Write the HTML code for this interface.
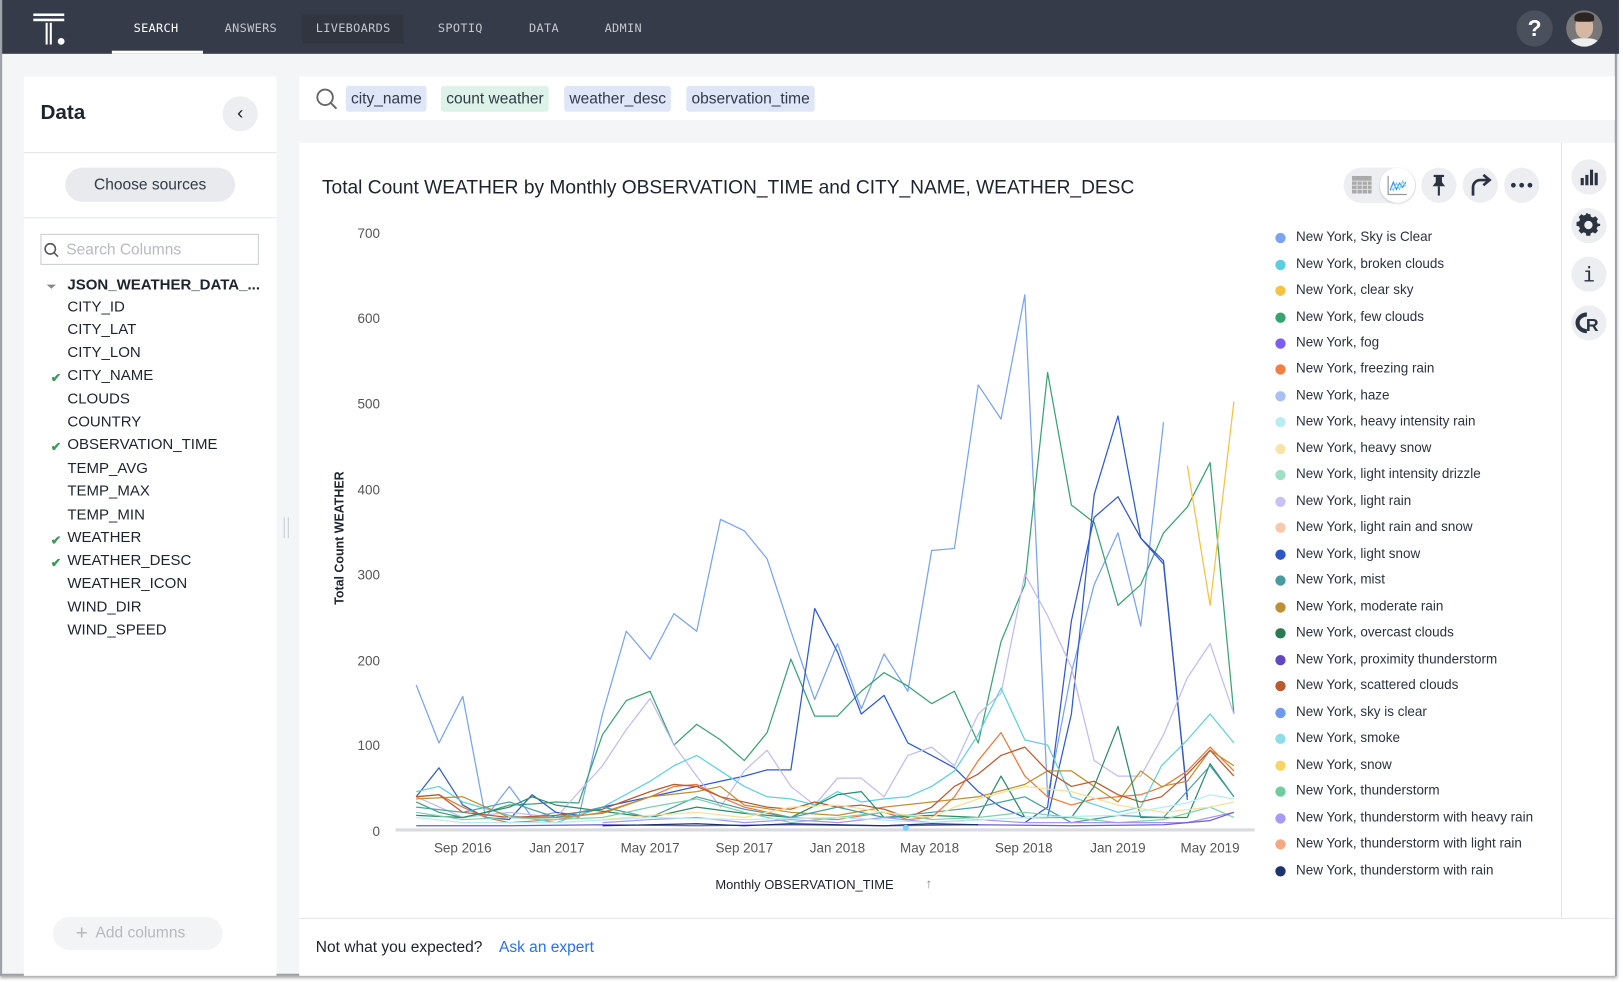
<!DOCTYPE html>
<html><head><meta charset="utf-8">
<style>
*{box-sizing:border-box;margin:0;padding:0}
html,body{width:1623px;height:982px;overflow:hidden;background:#fff;font-family:"Liberation Sans",sans-serif}
#w{position:absolute;left:0;top:0;width:1568px;height:949px;transform:translate(-2px,0) scale(1.0351,1.0348);transform-origin:0 0;}
.win{position:absolute;left:2px;top:0;width:1562px;height:943px;background:#f4f5f7;border:2px solid #9a9ea6;border-top:none;box-shadow:0 2px 3px rgba(0,0,0,.35)}
.nav{position:absolute;left:0;top:0;width:1562px;height:52px;background:#353b48}
.nav span{position:absolute;top:20px;font-family:"DejaVu Sans Mono","Liberation Mono",monospace;font-size:11.5px;color:#c3c7cf;letter-spacing:.3px}
.abs{position:absolute}
.panel{position:absolute;background:#fff}
.item{position:absolute;left:63px;font-size:14.5px;color:#1d232f}
.chk{position:absolute;left:47px;color:#3a9a5a;font-size:12px;font-weight:bold}
.chip{position:absolute;top:83px;height:25px;line-height:25px;padding:0 5px;font-size:15px;color:#333a47;border-radius:3px}
.circ{position:absolute;width:34px;height:34px;border-radius:50%;background:#eceef2}
.lg{position:absolute;left:1230px;font-size:13px;color:#2b3240;white-space:nowrap}
.lg i{position:absolute;left:0;top:4px;width:10px;height:10px;border-radius:50%}
.lg b{font-weight:normal;margin-left:20px}
.yl{position:absolute;left:330px;width:35px;text-align:right;font-size:13px;color:#555}
.xl{position:absolute;top:812px;font-size:13px;color:#555;transform:translateX(-50%);white-space:nowrap}
</style></head><body><div id="w">
<div class="win">
<div class="nav">
 <svg class="abs" style="left:30px;top:13px" width="34" height="32" viewBox="0 0 34 32"><rect x="0" y="0" width="30" height="2.5" fill="#fff"/><rect x="0" y="5" width="30" height="2.5" fill="#fff"/><rect x="12" y="9" width="2" height="21" fill="#fff"/><rect x="16" y="9" width="2" height="21" fill="#fff"/><circle cx="27" cy="27" r="3.3" fill="#fff"/></svg>
 <span style="left:127px;color:#fff">SEARCH</span>
 <div class="abs" style="left:106px;top:49px;width:88px;height:3px;background:#fff"></div>
 <span style="left:215px">ANSWERS</span>
 <div class="abs" style="left:290px;top:14px;width:98px;height:28px;background:#30353f"></div>
 <span style="left:303px">LIVEBOARDS</span>
 <span style="left:421px">SPOTIQ</span>
 <span style="left:509px">DATA</span>
 <span style="left:582px">ADMIN</span>
 <div class="abs" style="left:1463px;top:10px;width:35px;height:35px;border-radius:50%;background:#4a505c;color:#fff;font-size:22px;font-weight:bold;text-align:center;line-height:35px">?</div>
 <div class="abs" style="left:1511px;top:10px;width:35px;height:35px;border-radius:50%;background:#777;overflow:hidden"><div class="abs" style="left:9px;top:5px;width:17px;height:22px;border-radius:45%;background:#d6b7a3"></div><div class="abs" style="left:8px;top:2px;width:19px;height:9px;border-radius:50% 50% 20% 20%;background:#2b2420"></div><div class="abs" style="left:3px;top:27px;width:29px;height:12px;border-radius:40%;background:#eee"></div></div>
</div>

<div class="panel" style="left:21px;top:74px;width:244px;height:869px"></div>
<div class="abs" style="left:37px;top:98px;font-size:20px;font-weight:bold;color:#1d232f">Data</div>
<div class="circ" style="left:213px;top:93px;text-align:center;line-height:33px;font-size:18px;color:#222">&#8249;</div>
<div class="abs" style="left:21px;top:147px;width:244px;height:1px;background:#e3e5e9"></div>
<div class="abs" style="left:61px;top:162px;width:164px;height:33px;border-radius:17px;background:#e8eaee;text-align:center;line-height:33px;font-size:15px;color:#333a47">Choose sources</div>
<div class="abs" style="left:21px;top:210px;width:244px;height:1px;background:#e3e5e9"></div>
<div class="abs" style="left:37px;top:226px;width:211px;height:30px;border:1px solid #c8cbd1"></div>
<svg class="abs" style="left:40px;top:234px" width="16" height="16"><circle cx="6.5" cy="6.5" r="5" fill="none" stroke="#555" stroke-width="1.5"/><line x1="10" y1="10" x2="14" y2="14" stroke="#555" stroke-width="1.5"/></svg>
<div class="abs" style="left:62px;top:233px;font-size:15px;color:#b6bac2">Search Columns</div>
<svg class="abs" style="left:42px;top:274px" width="12" height="8"><path d="M1 1h9l-4.5 4z" fill="#888"/></svg>
<div class="item" style="top:268px;font-weight:bold">JSON_WEATHER_DATA_...</div>
<div class="item" style="top:289px">CITY_ID</div>
<div class="item" style="top:311px">CITY_LAT</div>
<div class="item" style="top:333px">CITY_LON</div>
<div class="chk" style="top:358px">&#10004;</div><div class="item" style="top:355px">CITY_NAME</div>
<div class="item" style="top:378px">CLOUDS</div>
<div class="item" style="top:400px">COUNTRY</div>
<div class="chk" style="top:425px">&#10004;</div><div class="item" style="top:422px">OBSERVATION_TIME</div>
<div class="item" style="top:445px">TEMP_AVG</div>
<div class="item" style="top:467px">TEMP_MAX</div>
<div class="item" style="top:490px">TEMP_MIN</div>
<div class="chk" style="top:515px">&#10004;</div><div class="item" style="top:512px">WEATHER</div>
<div class="chk" style="top:537px">&#10004;</div><div class="item" style="top:534px">WEATHER_DESC</div>
<div class="item" style="top:556px">WEATHER_ICON</div>
<div class="item" style="top:579px">WIND_DIR</div>
<div class="item" style="top:601px">WIND_SPEED</div>
<div class="abs" style="left:49px;top:886px;width:164px;height:32px;border-radius:16px;background:#f3f4f6;color:#b5b9c0;font-size:15px;line-height:32px;padding-left:22px"><span style="font-size:20px;vertical-align:-2px">+</span>&nbsp; Add columns</div>
<div class="abs" style="left:272px;top:500px;width:1px;height:20px;background:#c9ccd2"></div>
<div class="abs" style="left:276px;top:500px;width:1px;height:20px;background:#c9ccd2"></div>

<div class="panel" style="left:287px;top:74px;width:1271px;height:42px"></div>
<svg class="abs" style="left:302px;top:84px" width="24" height="24"><circle cx="10" cy="10" r="7.5" fill="none" stroke="#666" stroke-width="1.8"/><line x1="15.5" y1="15.5" x2="21" y2="21" stroke="#666" stroke-width="1.8"/></svg>
<div class="chip" style="left:332px;background:#dfe6f8">city_name</div>
<div class="chip" style="left:424px;background:#dcf3e9">count weather</div>
<div class="chip" style="left:543px;background:#dfe6f8">weather_desc</div>
<div class="chip" style="left:661px;background:#dfe6f8">observation_time</div>

<div class="panel" style="left:287px;top:138px;width:1271px;height:805px"></div>
<div class="abs" style="left:1506px;top:138px;width:1px;height:750px;background:#e3e5e9"></div>
<div class="abs" style="left:287px;top:887px;width:1271px;height:1px;background:#e3e5e9"></div>
<div class="abs" style="left:309px;top:170px;font-size:18.5px;color:#1d232f">Total Count WEATHER by Monthly OBSERVATION_TIME and CITY_NAME, WEATHER_DESC</div>
<div class="abs" style="left:1296px;top:162px;width:70px;height:34px;border-radius:17px;background:#eceef2"></div>
<svg class="abs" style="left:1304px;top:170px" width="20" height="18"><rect x="0" y="0" width="19" height="17" fill="#aaa"/><g stroke="#ddd" stroke-width="1"><line x1="0" y1="5" x2="19" y2="5"/><line x1="0" y1="9" x2="19" y2="9"/><line x1="0" y1="13" x2="19" y2="13"/><line x1="5" y1="5" x2="5" y2="17"/><line x1="10" y1="5" x2="10" y2="17"/><line x1="15" y1="5" x2="15" y2="17"/></g></svg>
<div class="abs" style="left:1331px;top:162px;width:34px;height:34px;border-radius:50%;background:#fff;box-shadow:0 1px 2px rgba(0,0,0,.15)"></div>
<svg class="abs" style="left:1338px;top:169px" width="20" height="20"><path d="M1 1V19H19" fill="none" stroke="#999" stroke-width="1.2"/><path d="M3 15l3-8 3 7 3-6 3 4 3-5" fill="none" stroke="#4a90e2" stroke-width="1.2"/><path d="M3 11l3 4 3-7 3 6 3-8 3 5" fill="none" stroke="#7ed3f0" stroke-width="1.2"/></svg>
<div class="circ" style="left:1371px;top:162px"></div>
<svg class="abs" style="left:1379px;top:168px" width="18" height="22"><path d="M4 1h10v2h-2v5l3 4H3l3-4V3H4z" fill="#2b3240"/><rect x="8" y="12" width="2" height="9" fill="#2b3240"/></svg>
<div class="circ" style="left:1411px;top:162px"></div>
<svg class="abs" style="left:1417px;top:167px" width="22" height="24"><path d="M4 22V14a7 7 0 0 1 7-7h8" fill="none" stroke="#2b3240" stroke-width="2.6"/><path d="M14 2l6 5-6 5" fill="none" stroke="#2b3240" stroke-width="2.6"/></svg>
<div class="circ" style="left:1451px;top:162px"></div>
<svg class="abs" style="left:1457px;top:176px" width="24" height="6"><circle cx="3" cy="3" r="2.3" fill="#2b3240"/><circle cx="11" cy="3" r="2.3" fill="#2b3240"/><circle cx="19" cy="3" r="2.3" fill="#2b3240"/></svg>

<div class="circ" style="left:1516px;top:154px"></div>
<svg class="abs" style="left:1524px;top:162px" width="18" height="18"><rect x="1" y="10" width="3" height="7" fill="#2b3240"/><rect x="5.5" y="7" width="3" height="10" fill="#2b3240"/><rect x="10" y="2" width="3" height="15" fill="#2b3240"/><rect x="14.5" y="5" width="3" height="12" fill="#2b3240"/></svg>
<div class="circ" style="left:1516px;top:201px"></div>
<svg class="abs" style="left:1521px;top:206px" width="24" height="24" viewBox="0 0 24 24"><path d="M12 2l2 0 .6 2.6 2.2 1 2.3-1.4 2.8 2.8-1.4 2.3 1 2.2L24 12l0 2-2.6.6-1 2.2 1.4 2.3-2.8 2.8-2.3-1.4-2.2 1L14 24h-4l-.6-2.6-2.2-1-2.3 1.4-2.8-2.8 1.4-2.3-1-2.2L0 14v-4l2.6-.6 1-2.2-1.4-2.3 2.8-2.8 2.3 1.4 2.2-1L10 0z" transform="translate(0 -1) scale(.95)" fill="#2b3240"/><circle cx="11.5" cy="11.5" r="4" fill="#eceef2"/></svg>
<div class="circ" style="left:1516px;top:248px;text-align:center;line-height:34px;font-family:'DejaVu Sans Mono',monospace;font-size:20px;color:#2b3240">i</div>
<div class="circ" style="left:1516px;top:295px"></div>
<svg class="abs" style="left:1519px;top:300px" width="28" height="24"><path d="M12 4A9 8 0 1 0 12 20" fill="none" stroke="#2b3240" stroke-width="4"/><text x="11" y="20" font-family="Liberation Sans" font-weight="bold" font-size="17" fill="#2b3240">R</text></svg>

<div class="yl" style="top:218px">700</div>
<div class="yl" style="top:300px">600</div>
<div class="yl" style="top:383px">500</div>
<div class="yl" style="top:466px">400</div>
<div class="yl" style="top:548px">300</div>
<div class="yl" style="top:631px">200</div>
<div class="yl" style="top:713px">100</div>
<div class="yl" style="top:796px">0</div>
<div class="abs" style="left:326px;top:520px;transform:translate(-50%,-50%) rotate(-90deg);font-size:12px;font-weight:bold;color:#1d232f;white-space:nowrap">Total Count WEATHER</div>
<div class="xl" style="left:445px">Sep 2016</div>
<div class="xl" style="left:536px">Jan 2017</div>
<div class="xl" style="left:626px">May 2017</div>
<div class="xl" style="left:717px">Sep 2017</div>
<div class="xl" style="left:807px">Jan 2018</div>
<div class="xl" style="left:896px">May 2018</div>
<div class="xl" style="left:987px">Sep 2018</div>
<div class="xl" style="left:1078px">Jan 2019</div>
<div class="xl" style="left:1167px">May 2019</div>
<div class="abs" style="left:689px;top:848px;font-size:12.5px;color:#1d232f">Monthly OBSERVATION_TIME</div>
<div class="abs" style="left:892px;top:846px;font-size:13px;color:#888">&#8593;</div>

<svg class="abs" style="left:0;top:0" width="1568" height="949">
<line x1="380" y1="802" x2="1210" y2="802" stroke="#d9dbdf" stroke-width="3"/>
<g fill="none" stroke-width="1.2" stroke-linejoin="round">
<polyline stroke="#79a3f2" points="400,662 422,718 445,673 467,790 490,760 512,790 535,785 557,790 580,690 603,610 626,637 649,593 671,610 694,502 717,513 739,540 762,610 785,676 807,622 830,685 852,632 875,668 898,532 920,530 943,372 965,405 988,285 1010,770 1033,650 1055,565 1078,515 1100,605 1122,408"/>
<polyline stroke="#3aa372" points="400,775 422,785 445,790 467,785 490,778 512,777 535,775 557,776 580,710 603,677 626,668 649,720 671,700 694,715 717,735 739,708 762,637 785,692 807,692 830,668 852,650 875,663 898,680 920,668 943,718 965,620 988,565 1010,360 1033,488 1055,505 1078,585 1100,565 1122,515 1145,490 1167,447 1190,690"/>
<polyline stroke="#2d5bd0" points="400,770 422,742 445,778 467,790 490,792 512,768 535,785 557,788 580,780 603,775 626,770 649,765 671,760 694,755 717,750 739,744 762,744 785,588 807,630 830,690 852,672 875,718 898,730 920,742 943,765 965,780 988,790 1010,790 1033,690 1055,478 1078,402 1100,520 1122,542 1145,773"/>
<polyline stroke="#3457c8" points="988,795 1010,780 1033,600 1055,500 1078,480 1100,520 1122,545 1145,770"/>
<polyline stroke="#c2bbf2" points="400,770 445,790 490,785 535,790 580,740 603,705 626,675 649,720 671,750 694,780 717,745 739,725 762,760 785,778 807,752 830,752 852,770 875,730 898,722 920,740 943,690 965,670 988,555 1010,595 1033,645 1055,735 1078,750 1100,750 1122,710 1145,655 1167,622 1190,690"/>
<polyline stroke="#f5c242" points="1145,450 1167,585 1190,388"/>
<polyline stroke="#e8793a" points="400,770 422,768 445,780 467,790 490,795 535,792 580,785 626,770 649,760 671,758 694,770 717,780 762,790 807,792 852,785 875,792 898,790 920,770 943,735 965,708 988,750 1010,770 1033,778 1055,772 1078,770 1100,768 1122,760 1145,745 1167,722 1190,745"/>
<polyline stroke="#5fd0e0" points="400,765 422,760 445,775 490,788 535,795 580,780 626,755 649,740 671,730 694,745 717,760 739,770 762,772 785,778 807,765 830,775 852,772 875,770 898,760 920,745 943,710 965,665 988,715 1010,720 1033,770 1078,785 1100,780 1120,740 1145,715 1167,690 1190,718"/>
<polyline stroke="#c09030" points="400,772 445,770 490,790 535,790 580,786 626,770 671,765 694,760 717,778 762,785 807,788 852,780 898,775 943,770 988,758 1010,745 1033,745 1055,760 1078,775 1100,745 1120,760 1145,755 1167,725 1190,740"/>
<polyline stroke="#b85a30" points="400,770 422,768 445,785 490,790 535,788 580,782 626,765 649,758 671,760 694,770 739,780 762,782 785,775 807,780 830,778 852,782 875,790 898,780 920,760 943,748 965,730 988,722 1010,745 1033,760 1055,755 1078,768 1100,775 1120,770 1145,748 1167,725 1190,750"/>
<polyline stroke="#2e8a6a" points="400,788 445,790 490,780 512,770 535,778 580,784 626,790 671,780 717,786 762,790 807,768 830,765 852,790 898,788 943,790 965,750 988,790 1033,790 1055,760 1078,702 1100,790 1145,790 1167,738 1190,770"/>
<polyline stroke="#4aa0a8" points="400,780 445,785 490,775 535,790 580,780 626,790 671,770 717,782 762,790 807,780 852,790 898,785 943,780 988,770 1033,795 1078,788 1122,790 1167,740 1190,770"/>
<polyline stroke="#7bd2ad" points="400,785 445,792 490,790 535,792 580,790 626,780 671,772 717,785 762,795 807,790 852,785 898,792 943,790 988,785 1033,790 1078,795 1122,792 1167,780 1190,790"/>
<polyline stroke="#a898f0" points="580,795 626,792 671,790 717,795 762,792 807,795 852,790 898,795 943,792 988,795 1033,795 1078,795 1122,795 1145,795 1167,790 1190,785"/>
<polyline stroke="#f7e09a" points="580,792 626,788 671,785 717,790 762,780 807,778 852,785 898,790 920,780 943,772 988,760 1033,765 1078,778 1122,785 1167,780 1190,775"/>
<polyline stroke="#b8ecf0" points="400,790 445,795 535,795 626,790 717,792 807,790 898,795 988,790 1078,788 1122,780 1145,776 1167,768 1190,772"/>
<polyline stroke="#6b5fd0" points="400,798 490,798 580,797 671,798 762,797 852,798 943,797 1033,798 1122,797 1167,793 1190,785"/>
<polyline stroke="#1e2f6a" points="580,798 626,797 671,796 717,798 762,796 807,797 852,798 898,796 943,797"/>
</g>
<circle cx="873" cy="800" r="3" fill="#7ed3f0"/>
</svg>

<div class="lg" style="top:221px"><i style="background:#7aa3f0"></i><b>New York, Sky is Clear</b></div>
<div class="lg" style="top:247px"><i style="background:#5fcde0"></i><b>New York, broken clouds</b></div>
<div class="lg" style="top:272px"><i style="background:#f5c242"></i><b>New York, clear sky</b></div>
<div class="lg" style="top:298px"><i style="background:#3aa372"></i><b>New York, few clouds</b></div>
<div class="lg" style="top:323px"><i style="background:#7b5ef0"></i><b>New York, fog</b></div>
<div class="lg" style="top:348px"><i style="background:#ef7f45"></i><b>New York, freezing rain</b></div>
<div class="lg" style="top:374px"><i style="background:#a8c0f4"></i><b>New York, haze</b></div>
<div class="lg" style="top:399px"><i style="background:#b8ecf0"></i><b>New York, heavy intensity rain</b></div>
<div class="lg" style="top:425px"><i style="background:#f8e3a8"></i><b>New York, heavy snow</b></div>
<div class="lg" style="top:450px"><i style="background:#9fe0c4"></i><b>New York, light intensity drizzle</b></div>
<div class="lg" style="top:476px"><i style="background:#c9c0f4"></i><b>New York, light rain</b></div>
<div class="lg" style="top:501px"><i style="background:#f7c8ab"></i><b>New York, light rain and snow</b></div>
<div class="lg" style="top:527px"><i style="background:#2d58c4"></i><b>New York, light snow</b></div>
<div class="lg" style="top:552px"><i style="background:#4a9aa0"></i><b>New York, mist</b></div>
<div class="lg" style="top:578px"><i style="background:#bd9035"></i><b>New York, moderate rain</b></div>
<div class="lg" style="top:603px"><i style="background:#2a7a55"></i><b>New York, overcast clouds</b></div>
<div class="lg" style="top:629px"><i style="background:#6048c0"></i><b>New York, proximity thunderstorm</b></div>
<div class="lg" style="top:654px"><i style="background:#b95a30"></i><b>New York, scattered clouds</b></div>
<div class="lg" style="top:680px"><i style="background:#6f98ef"></i><b>New York, sky is clear</b></div>
<div class="lg" style="top:705px"><i style="background:#8fdde8"></i><b>New York, smoke</b></div>
<div class="lg" style="top:731px"><i style="background:#f7d466"></i><b>New York, snow</b></div>
<div class="lg" style="top:756px"><i style="background:#6fcc9e"></i><b>New York, thunderstorm</b></div>
<div class="lg" style="top:782px"><i style="background:#a79af2"></i><b>New York, thunderstorm with heavy rain</b></div>
<div class="lg" style="top:807px"><i style="background:#f5a882"></i><b>New York, thunderstorm with light rain</b></div>
<div class="lg" style="top:833px"><i style="background:#1e336e"></i><b>New York, thunderstorm with rain</b></div>

<div class="abs" style="left:303px;top:907px;font-size:15px;color:#1d232f">Not what you expected?</div>
<div class="abs" style="left:480px;top:907px;font-size:15px;color:#2770ef">Ask an expert</div>
</div>
</div></body></html>
